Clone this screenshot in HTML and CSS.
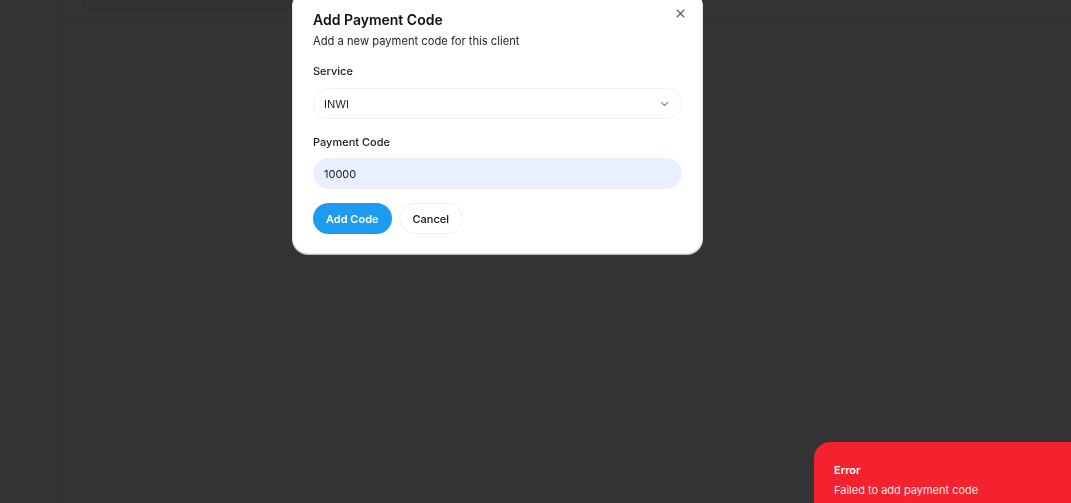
FILE: index.html
```html
<!DOCTYPE html>
<html lang="en">
<head>
<meta charset="utf-8">
<title>Add Payment Code</title>
<link rel="stylesheet" href="styles.css">
</head>
<body>
<div class="page">
  <aside class="sidebar"></aside>
  <main class="main">
    <div class="topbar">
      <div class="card"></div>
    </div>
  </main>
</div>

<div class="modal" role="dialog">
  <button class="close" aria-label="Close">
    <svg width="9" height="9" viewBox="0 0 9 9"><path d="M1 1L8 8M8 1L1 8" stroke="#555" stroke-width="1.1" stroke-linecap="round"/></svg>
  </button>
  <h2 class="title">Add Payment Code</h2>
  <p class="subtitle">Add a new payment code for this client</p>

  <div class="field">
    <label class="label">Service</label>
    <div class="select">
      <span>INWI</span>
      <svg width="9" height="6" viewBox="0 0 9 6"><path d="M1.2 1.3L4.5 4.5L7.8 1.3" fill="none" stroke="#888" stroke-width="1.1" stroke-linecap="round" stroke-linejoin="round"/></svg>
    </div>
  </div>

  <div class="field">
    <label class="label">Payment Code</label>
    <div class="input">10000</div>
  </div>

  <div class="actions">
    <button class="btn primary">Add Code</button>
    <button class="btn secondary">Cancel</button>
  </div>
</div>

<div class="toast">
  <div class="toast-title">Error</div>
  <div class="toast-desc">Failed to add payment code</div>
</div>
</body>
</html>
```

FILE: styles.css
```css
* { box-sizing: border-box; }
html, body { margin: 0; height: 100%; }
body {
  background: #333333;
  font-family: Inter, "Noto Sans", sans-serif;
  overflow: hidden;
}
.page { display: flex; height: 100vh; }
.sidebar { width: 62px; border-right: 1px solid #2c2c2c; flex: none; }
.main { flex: 1; }
.topbar {
  height: 24px;
  border-bottom: 1px solid #2e2e2e;
  padding-left: 20px;
}
.card {
  width: 600px;
  height: 11px;
  border: 1px solid #2c2c2c;
  border-top: none;
  border-radius: 0 0 14px 14px;
  background: #313131;
}

.modal {
  position: fixed;
  left: 292px;
  top: -10px;
  width: 411px;
  background: #ffffff;
  border-radius: 16px;
  padding: 19px 20px 19px 20px;
  border: 1px solid #e5e5e5;
  box-shadow: 0 1px 0 #bdbdbd;
}
.close {
  position: absolute;
  top: 18px;
  right: 17px;
  background: none;
  border: none;
  padding: 0;
  display: flex;
  cursor: pointer;
}
.title {
  margin: 0;
  font-size: 14px;
  font-weight: 600;
  color: #111;
  line-height: 20px;
}
.subtitle {
  margin: 2px 0 0;
  font-size: 11.2px;
  color: #1f1f1f;
  line-height: 18px;
}
.field { margin-top: 13px; }
.field + .field { margin-top: 15px; }
.label {
  display: block;
  font-size: 11px;
  font-weight: 500;
  color: #1a1a1a;
  line-height: 16px;
  margin-bottom: 9px;
}
.field + .field .label { margin-bottom: 8px; }
.select, .input {
  height: 31px;
  border-radius: 16px;
  border: 1px solid #f0f0f0;
  padding: 0 10px;
  display: flex;
  align-items: center;
  justify-content: space-between;
  font-size: 11px;
  color: #1a1a1a;
}
.select span { color: #2a1a2a; }
.select svg { margin-right: 2px; }
.input { background: #e8f0fe; border-color: #e8f0fe; }
.actions {
  display: flex;
  gap: 7px;
  margin-top: 14px;
}
.btn {
  font-family: inherit;
  font-size: 11px;
  font-weight: 500;
  height: 31px;
  border-radius: 16px;
  padding: 0 13px;
  cursor: pointer;
}
.primary {
  background: #1d9bf0;
  color: #fff;
  border: none;
  font-weight: 600;
}
.secondary {
  background: #fff;
  color: #111;
  border: 1px solid #f0f0f0;
}

.toast {
  position: fixed;
  left: 814px;
  top: 442px;
  width: 300px;
  height: 100px;
  background: #f4212f;
  border-radius: 16px;
  padding: 20px 20px;
  color: #fff;
}
.toast-title { font-size: 11px; font-weight: 600; line-height: 16px; }
.toast-desc { font-size: 11px; line-height: 16px; margin-top: 4px; color: rgba(255,255,255,0.92); }
```
